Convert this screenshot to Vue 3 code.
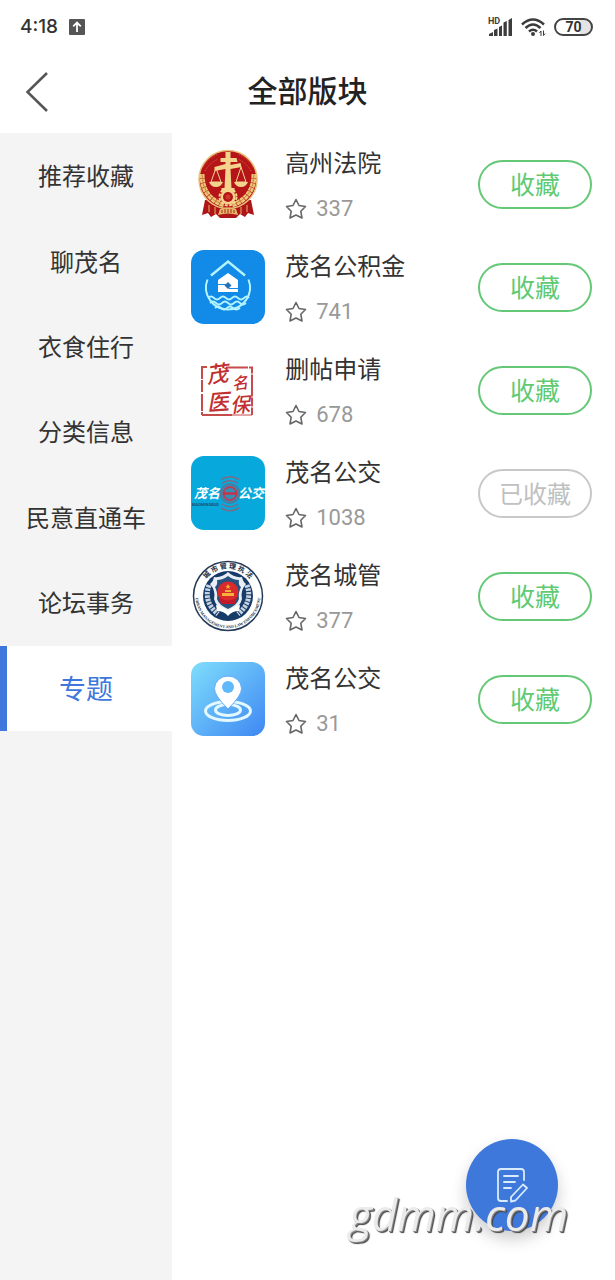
<script setup>
import { ref } from 'vue'

const categories = ['推荐收藏', '聊茂名', '衣食住行', '分类信息', '民意直通车', '论坛事务', '专题']
const active = ref('专题')

const boards = ref([
  { id: 1, icon: 'court', name: '高州法院', count: 337, saved: false },
  { id: 2, icon: 'fund', name: '茂名公积金', count: 741, saved: false },
  { id: 3, icon: 'seal', name: '删帖申请', count: 678, saved: false },
  { id: 4, icon: 'bus', name: '茂名公交', count: 1038, saved: true },
  { id: 5, icon: 'city', name: '茂名城管', count: 377, saved: false },
  { id: 6, icon: 'pin', name: '茂名公交', count: 31, saved: false }
])
</script>

<template>
  <div class="page">
    <div class="status">
      <div class="status-side">
        <span class="clock">4:18</span>
        <svg class="upload" viewBox="0 0 16 16" aria-hidden="true">
          <rect width="16" height="16" rx="1" fill="#555" />
          <path d="M8 13V4M4.200 7.400 8 3.600l3.800 3.800" fill="none" stroke="#fff" stroke-width="1.800" />
        </svg>
      </div>
      <div class="status-side status-right">
        <svg class="signal" viewBox="0 0 25 20" aria-hidden="true">
          <text x="0" y="7" class="hd">HD</text>
          <path d="M1 19v-2l4-2v4zM6 19v-6l3.500-1.500V19zM11 19V10l3-1.500V19zM15.500 19V5.500L18.800 4v15zM20.500 19V3l3.500-2v18z" fill="#3c3c3c" />
        </svg>
        <svg class="wifi" viewBox="0 0 25 20" aria-hidden="true">
          <g fill="none" stroke="#3c3c3c" stroke-width="2.600">
            <path d="M1 7.500Q12 -2.500 23 7.500" />
            <path d="M4.500 11Q12 4 19.500 11" />
            <path d="M8 14.500Q12 11 16 14.500" />
          </g>
          <circle cx="12" cy="17" r="2" fill="#3c3c3c" />
          <path d="M20 19v-5l-1.500 2M22.500 13.500v5l1.500-2" fill="none" stroke="#3c3c3c" stroke-width="1" />
        </svg>
        <span class="battery">70</span>
      </div>
    </div>

    <header class="bar">
      <button class="back" type="button" aria-label="返回">
        <svg viewBox="0 0 24 42" aria-hidden="true">
          <path d="M22 2 2.500 21 22 40" fill="none" stroke="#555" stroke-width="2.500" />
        </svg>
      </button>
      <h1>全部版块</h1>
    </header>

    <div class="body">
      <nav class="side">
        <div class="cats">
          <button
            v-for="c in categories"
            :key="c"
            type="button"
            class="cat"
            :class="{ active: c === active }"
            @click="active = c"
          >{{ c }}</button>
        </div>
      </nav>

      <main class="list">
        <article v-for="b in boards" :key="b.id" class="row">
          <svg v-if="b.icon === 'court'" class="logo" viewBox="0 0 74 74" aria-hidden="true">
            <path d="M14 53 11 68l6-2 3 4 5-3 4 4h16l4-4 5 3 3-4 6 2-3-15z" fill="#ad1518" />
            <path d="M18 58v7M24 60v7M50 60v7M56 58v7" stroke="#e8b565" stroke-width="1" />
            <circle cx="37" cy="32.500" r="29" fill="#b51419" stroke="#e9c27b" stroke-width="1.500" />
            <path d="M12 20c5-8 9-10 15-13M14 24c4-7 9-10 13-12M62 20c-5-8-9-10-15-13M60 24c-4-7-9-10-13-12" fill="none" stroke="#d65c3b" stroke-width="1" stroke-dasharray="1 1" />
            <path d="M11 27q0 24 22 31M63 27q0 24-22 31" fill="none" stroke="#edc777" stroke-width="5" stroke-dasharray="4 .6" />
            <path d="M11 27q0 24 22 31M63 27q0 24-22 31" fill="none" stroke="#c98443" stroke-width="1" />
            <path d="M34.500 5h5v6h6l1 4h-7v3l10-2 1 4-11 2 1 19h3v4H30.500v-4h3l1-19-11 2v-4l11-3v-2h-5v-4h5z" fill="#f4d48c" />
            <path d="M25 21l-5 14h10zM50 20l-5 15h10z" fill="none" stroke="#f4d48c" stroke-width="1" />
            <path d="M18 35h14q-2 5-7 5t-7-5zM43 35h14q-2 5-7 5t-7-5z" fill="#f4d48c" />
            <circle cx="37" cy="50" r="8.500" fill="none" stroke="#f4d48c" stroke-width="2" stroke-dasharray="3 1.500" />
            <circle cx="37" cy="50" r="7.500" fill="#f4d48c" />
            <circle cx="37" cy="50" r="5" fill="#b51419" />
            <circle cx="37" cy="50" r="2.500" fill="#c93a2b" />
            <path d="M29 62q8-3 16 0l2 6q-10-3-20 0z" fill="#e7b868" />
            <path d="M31 63v3M34 62v4M37 62v4M40 62v4M43 63v3" stroke="#a3241b" stroke-width="1" />
          </svg>

          <svg v-else-if="b.icon === 'fund'" class="logo" viewBox="0 0 74 74" aria-hidden="true">
            <rect width="74" height="74" rx="13" fill="#118ae8" />
            <g fill="none" stroke="#b4f4ff">
              <path d="M20 25.500 37 11.500l17 14" stroke-width="2.500" />
              <path d="M16.500 29.500a22 22 0 1 0 41 0" stroke-width="2" />
              <path d="M17 48q3-3 6 0t6 0 6 0 6 0 6 0 6 0 5 0M19 53q3-3 6 0t6 0 6 0 6 0 6 0 6 0M24 58q3-3 6 0t6 0 6 0 7 0" stroke-width="1.800" />
            </g>
            <path d="M37 23 47 30v12H27V30z" fill="#fff" />
            <path d="M27 34.500h8l3 4h9" fill="none" stroke="#118ae8" stroke-width="1" />
            <path d="M37 32l3.500 3.500L37 39l-3.500-3.500z" fill="#2473b8" />
          </svg>

          <svg v-else-if="b.icon === 'seal'" class="logo" viewBox="0 0 74 74" aria-hidden="true">
            <g fill="none" stroke="#c64b4b">
              <path d="M16 14h-5v48" stroke-width="2" stroke-dasharray="17 1 12 2" />
              <path d="M11 62h30" stroke-width="2" />
              <path d="M35 14.500h26V62" stroke-width="2" stroke-dasharray="22 1 9 1" />
              <path d="M41 62h20" stroke-width="1" />
            </g>
            <g class="seal-text">
              <text x="15" y="29" font-size="22" transform="rotate(-8 26 20)">茂</text>
              <text x="16" y="57" font-size="22" transform="rotate(-4 28 49)">医</text>
              <text x="41" y="36" font-size="16" transform="rotate(-8 49 31)">名</text>
              <text x="39" y="59" font-size="20" transform="rotate(-4 50 52)">保</text>
            </g>
          </svg>

          <svg v-else-if="b.icon === 'bus'" class="logo" viewBox="0 0 74 74" aria-hidden="true">
            <rect width="74" height="74" rx="13" fill="#07a9dc" />
            <g fill="none" stroke="#7b6c86" stroke-width="1.500">
              <path d="M30 23.500a17 17 0 0 1 18 0M30 52a17 17 0 0 0 18 0" />
              <path d="M31 27.500a13 13 0 0 1 16 0M31 48a13 13 0 0 0 16 0" />
            </g>
            <circle cx="39" cy="37.500" r="9.500" fill="#318fb8" stroke="#4f7898" stroke-width="1.500" />
            <circle cx="39" cy="37.500" r="6.500" fill="none" stroke="#b83f57" stroke-width="2" />
            <path d="M32 37.500h14" stroke="#c73149" stroke-width="2.500" />
            <g class="bus-text">
              <text x="3" y="42" font-size="13">茂名</text>
              <text x="47" y="42" font-size="13">公交</text>
            </g>
            <text x="1" y="50" class="bus-small">MAOMINGBUS</text>
          </svg>

          <svg v-else-if="b.icon === 'city'" class="logo" viewBox="0 0 74 74" aria-hidden="true">
            <defs>
              <path id="ringTop" d="M9.500 37a27.500 27.500 0 0 1 55 0" />
              <path id="ringBottom" d="M4.500 37C4.500 18 4.500 37 4.500 37a32.500 32.500 0 0 0 65 0" />
              <path id="ringLower" d="M8 22a32.500 32.500 0 1 0 58 0" />
            </defs>
            <circle cx="37" cy="37" r="34.500" fill="#fff" stroke="#263a58" stroke-width="1.500" />
            <circle cx="37" cy="37" r="25" fill="#173b68" />
            <text class="ring-cn"><textPath href="#ringTop" startOffset="50%" text-anchor="middle">城 市 管 理 执 法</textPath></text>
            <text class="ring-en"><textPath href="#ringLower" startOffset="50%" text-anchor="middle">URBAN MANAGEMENT AND LAW ENFORCEMENT</textPath></text>
            <path d="M18 26q-6 17 9 29M56 26q6 17-9 29" fill="none" stroke="#c9d4e2" stroke-width="5" stroke-dasharray="2.500 1" />
            <path d="M37 13q6 6 14 5 1 5 4 7-6 7-4 15-2 9-14 15-12-6-14-15 2-8-4-15 3-2 4-7 8 1 14-5z" fill="#e9eef5" />
            <path d="M37 17q5 4 11 4-1 5 2 7-3 6-2 12-2 6-11 10-9-4-11-10 1-6-2-12 3-2 2-7 6 0 11-4z" fill="#28517f" />
            <circle cx="37" cy="33" r="10.500" fill="#d92a2b" />
            <path d="M31 34h12v3H31zM34 31h6v2h-6zM37 25l1 2h2l-2 1 1 2-2-1-2 1 1-2-2-1h2z" fill="#f5b13b" />
            <path d="M28 38q9 7 18 0l-2 7H30z" fill="#c2182a" />
            <path d="M25 46q6 1 12 6 6-5 12-6l-1 6q-7 0-11 5-4-5-11-5z" fill="#fff" />
          </svg>

          <svg v-else class="logo" viewBox="0 0 74 74" aria-hidden="true">
            <defs>
              <linearGradient id="sky" x1="0" y1="0" x2="1" y2="1">
                <stop offset="0" stop-color="#7fdefc" />
                <stop offset="1" stop-color="#3e87f3" />
              </linearGradient>
            </defs>
            <rect width="74" height="74" rx="13" fill="url(#sky)" />
            <ellipse cx="37" cy="49" rx="22.500" ry="9.500" fill="none" stroke="#e4f8ff" stroke-width="3" />
            <ellipse cx="37" cy="48" rx="12.500" ry="5.500" fill="none" stroke="#e4f8ff" stroke-width="3" />
            <path d="M37 47Q23 33 23.500 26.500a13.500 12.500 0 0 1 27 0Q51 33 37 47z" fill="#fff" stroke="#5ea9f7" stroke-width="1" />
            <circle cx="37" cy="25" r="6" fill="#62b9f9" />
          </svg>

          <div class="info">
            <h2>{{ b.name }}</h2>
            <p>
              <svg class="star" viewBox="0 0 22 22" aria-hidden="true">
                <path d="M11 1.500 14 7.500l6.500 1-4.700 4.700 1.200 6.800-6-3-6 3 1.200-6.800L1.500 8.500l6.500-1z" fill="none" stroke="#666" stroke-width="1.600" stroke-linejoin="round" />
              </svg>
              <span>{{ b.count }}</span>
            </p>
          </div>

          <button type="button" class="fav" :class="{ saved: b.saved }" @click="b.saved = !b.saved">
            {{ b.saved ? '已收藏' : '收藏' }}
          </button>
        </article>
      </main>
    </div>

    <button class="fab" type="button" aria-label="发帖">
      <svg viewBox="0 0 32 36" aria-hidden="true">
        <g fill="none" stroke="#d9ecff" stroke-width="1.800" stroke-linecap="round" stroke-linejoin="round">
          <path d="M28 13V5q0-3-3-3H5Q2 2 2 5v26q0 3 3 3h6" />
          <path d="M8 9h14M8 15h11M8 21h7" />
          <path d="M27 17.500 31 21 19.500 33.500 15 34.500v-4.500z" />
        </g>
      </svg>
    </button>
    <div class="mark">gdmm.com</div>
  </div>
</template>

<style>
body {
  margin: 0;
  background: #fff;
}
</style>

<style scoped>
.page {
  display: flex;
  flex-direction: column;
  min-height: 100vh;
  background: #fff;
  color: #333;
  font-family: Roboto, "Noto Sans CJK SC", sans-serif;
}

button {
  margin: 0;
  padding: 0;
  border: 0;
  background: none;
  font-family: inherit;
  cursor: pointer;
}

.status {
  display: flex;
  justify-content: space-between;
  align-items: center;
  height: 54px;
  padding: 0 22px 0 20px;
}

.status-side {
  display: flex;
  align-items: center;
  gap: 11px;
}

.status-right {
  gap: 8px;
}

.clock {
  font-family: Inter, sans-serif;
  font-size: 19px;
  font-weight: 500;
  line-height: 24px;
}

.upload {
  width: 16px;
  height: 16px;
}

.signal,
.wifi {
  width: 25px;
  height: 20px;
}

.hd {
  font: 700 9px Roboto, sans-serif;
  fill: #3c3c3c;
}

.battery {
  box-sizing: border-box;
  width: 39px;
  height: 18px;
  border: 2px solid #444;
  border-radius: 9px;
  background: linear-gradient(to right, #fff 70%, #e4e4e4 70%);
  font-size: 14px;
  font-weight: 700;
  line-height: 14px;
  text-align: center;
}

.bar {
  box-sizing: border-box;
  display: grid;
  grid-template-columns: 74px 1fr 74px;
  align-items: center;
  height: 79px;
  padding-bottom: 4px;
}

.back {
  display: flex;
  padding-left: 25px;
}

.back svg {
  width: 24px;
  height: 42px;
}

h1 {
  margin: 0;
  color: #222;
  font-size: 30px;
  font-weight: 500;
  line-height: 40px;
  text-align: center;
}

.body {
  display: flex;
  flex: 1;
}

.side {
  flex: none;
  width: 28%;
  background: #f4f4f4;
}

.cats {
  display: grid;
  grid-template-rows: repeat(7, 1fr);
  height: 598px;
}

.cat {
  padding-bottom: 2px;
  color: #333;
  font-size: 24px;
}

.cat.active {
  padding-right: 7px;
  border-left: 7px solid #4077dc;
  background: #fff;
  color: #4077dc;
  font-size: 27px;
}

.list {
  flex: 1;
  padding: 0 23px 0 19px;
}

.row {
  box-sizing: border-box;
  display: flex;
  align-items: center;
  gap: 20px;
  height: 103px;
  padding-bottom: 1px;
}

.logo {
  flex: none;
  width: 74px;
  height: 74px;
}

.seal-text {
  fill: #c12f31;
  font-family: "Noto Sans CJK SC", sans-serif;
  font-style: italic;
  font-weight: 500;
}

.bus-text {
  fill: #fff;
  font-family: "Noto Sans CJK SC", sans-serif;
  font-style: italic;
  font-weight: 700;
}

.bus-small {
  fill: #1d4f74;
  font: 700 4px Roboto, sans-serif;
}

.ring-cn {
  fill: #222f45;
  font: 700 7px "Noto Sans CJK SC", sans-serif;
}

.ring-en {
  fill: #222f45;
  font: 700 4px "Liberation Serif", serif;
}

.info {
  display: flex;
  flex: 1;
  flex-direction: column;
  gap: 15px;
  padding-top: 5px;
}

h2 {
  margin: 0;
  font-size: 24px;
  font-weight: 400;
  line-height: 30px;
}

.info p {
  display: flex;
  align-items: center;
  gap: 9px;
  margin: 0;
  color: #999;
  font-size: 22px;
  line-height: 30px;
}

.star {
  width: 22px;
  height: 22px;
}

.fav {
  box-sizing: border-box;
  flex: none;
  width: 114px;
  height: 49px;
  padding-bottom: 2px;
  border: 2px solid #65c877;
  border-radius: 25px;
  color: #5fca72;
  font-size: 25px;
}

.fav.saved {
  border-color: #c8c8c8;
  color: #c0c0c0;
  font-size: 24px;
}

.fab {
  position: fixed;
  right: 57px;
  bottom: 49px;
  display: flex;
  align-items: center;
  justify-content: center;
  width: 92px;
  height: 92px;
  border-radius: 50%;
  background: #3f78db;
  box-shadow: 0 8px 16px rgba(0, 0, 0, 0.2);
}

.fab svg {
  width: 32px;
  height: 36px;
}

.mark {
  position: fixed;
  right: 47px;
  bottom: 36px;
  color: #ebebeb;
  font-family: "Open Sans", sans-serif;
  font-size: 44px;
  font-style: italic;
  font-weight: 500;
  line-height: 60px;
  text-shadow: 1px 1px 0 #888, 2px 2px 1px #444;
  pointer-events: none;
}
</style>
